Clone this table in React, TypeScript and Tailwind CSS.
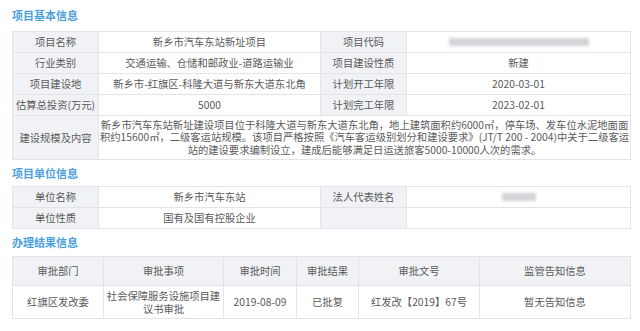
import React from 'react';

const font = {
  fontFamily: '"Microsoft YaHei", "Noto Sans CJK SC", "Noto Sans", sans-serif',
};

const Title = ({ text, h }: { text: string; h: string }) => (
  <div className={`flex items-center ${h}`}>
    <h3 className="text-[11px] font-bold leading-none text-[#4aa0dc]">{text}</h3>
  </div>
);

const Blur = ({ w }: { w: string }) => (
  <div className={`mx-auto h-[8px] ${w} bg-[#d3d5d9] blur-[1.5px]`} />
);

const lab = 'border border-[#e1e4e8] bg-[#f0f2f5] text-center';
const val = 'border border-[#e1e4e8] bg-white text-center';

export default function App() {
  return (
    <div
      className="h-[331px] w-[640px] overflow-hidden bg-white px-[12px] text-[10.3px] leading-[12px] text-[#5a5a5a]"
      style={font}
    >
      <Title text="项目基本信息" h="h-[31px]" />
      <table className="w-[618px] table-fixed border-collapse">
        <colgroup>
          <col className="w-[86px]" />
          <col className="w-[222px]" />
          <col className="w-[86px]" />
          <col className="w-[224px]" />
        </colgroup>
        <tbody>
          <tr className="h-[21px]">
            <td className={lab}>项目名称</td>
            <td className={val}>新乡市汽车东站新址项目</td>
            <td className={lab}>项目代码</td>
            <td className={val}>
              <Blur w="w-[140px]" />
            </td>
          </tr>
          <tr className="h-[21px]">
            <td className={lab}>行业类别</td>
            <td className={val}>交通运输、仓储和邮政业-道路运输业</td>
            <td className={lab}>项目建设性质</td>
            <td className={val}>新建</td>
          </tr>
          <tr className="h-[21px]">
            <td className={lab}>项目建设地</td>
            <td className={val}>新乡市-红旗区-科隆大道与新东大道东北角</td>
            <td className={lab}>计划开工年限</td>
            <td className={val}>2020-03-01</td>
          </tr>
          <tr className="h-[21px]">
            <td className={lab}>估算总投资(万元)</td>
            <td className={val}>5000</td>
            <td className={lab}>计划完工年限</td>
            <td className={val}>2023-02-01</td>
          </tr>
          <tr className="h-[44px]">
            <td className={lab}>建设规模及内容</td>
            <td colSpan={3} className={`${val} whitespace-nowrap leading-[12.5px]`}>
              新乡市汽车东站新址建设项目位于科隆大道与新东大道东北角，地上建筑面积约6000㎡，停车场、发车位水泥地面面
              <br />
              积约15600㎡，二级客运站规模。该项目严格按照《汽车客运级别划分和建设要求》(JT/T 200 - 2004)中关于二级客运
              <br />
              站的建设要求编制设立，建成后能够满足日运送旅客5000-10000人次的需求。
            </td>
          </tr>
        </tbody>
      </table>

      <Title text="项目单位信息" h="h-[26px]" />
      <table className="w-[618px] table-fixed border-collapse">
        <colgroup>
          <col className="w-[86px]" />
          <col className="w-[222px]" />
          <col className="w-[86px]" />
          <col className="w-[224px]" />
        </colgroup>
        <tbody>
          <tr className="h-[21px]">
            <td className={lab}>单位名称</td>
            <td className={val}>新乡市汽车东站</td>
            <td className={lab}>法人代表姓名</td>
            <td className={val}>
              <Blur w="w-[34px]" />
            </td>
          </tr>
          <tr className="h-[21px]">
            <td className={lab}>单位性质</td>
            <td className={val}>国有及国有控股企业</td>
            <td className={lab}></td>
            <td className={val}></td>
          </tr>
        </tbody>
      </table>

      <Title text="办理结果信息" h="h-[27px]" />
      <table className="w-[618px] table-fixed border-collapse">
        <colgroup>
          <col className="w-[91px]" />
          <col className="w-[120px]" />
          <col className="w-[73px]" />
          <col className="w-[62px]" />
          <col className="w-[121px]" />
          <col className="w-[151px]" />
        </colgroup>
        <tbody>
          <tr className="h-[29px]">
            <td className={lab}>审批部门</td>
            <td className={lab}>审批事项</td>
            <td className={lab}>审批时间</td>
            <td className={lab}>审批结果</td>
            <td className={lab}>审批文号</td>
            <td className={lab}>监管告知信息</td>
          </tr>
          <tr className="h-[33px]">
            <td className={val}>红旗区发改委</td>
            <td className={`${val} px-[2px] leading-[13px]`}>社会保障服务设施项目建议书审批</td>
            <td className={val}>2019-08-09</td>
            <td className={val}>已批复</td>
            <td className={val}>红发改【2019】67号</td>
            <td className={val}>暂无告知信息</td>
          </tr>
        </tbody>
      </table>
    </div>
  );
}
